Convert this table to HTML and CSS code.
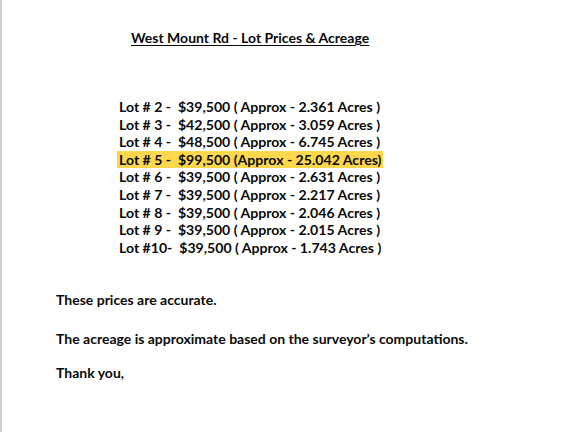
FILE: index.html
```html
<!DOCTYPE html>
<html>
<head>
<meta charset="utf-8">
<link rel="stylesheet" href="styles.css">
</head>
<body>
<div class="page">
  <h1 class="title">West Mount Rd - Lot Prices &amp; Acreage</h1>
  <ul class="lots">
    <li>Lot # 2 -&nbsp; $39,500 ( Approx - 2.361 Acres )</li>
    <li>Lot # 3 -&nbsp; $42,500 ( Approx - 3.059 Acres )</li>
    <li>Lot # 4 -&nbsp; $48,500 ( Approx - 6.745 Acres )</li>
    <li class="hl">Lot # 5 -&nbsp; $99,500 (Approx - 25.042 Acres)</li>
    <li>Lot # 6 -&nbsp; $39,500 ( Approx - 2.631 Acres )</li>
    <li>Lot # 7 -&nbsp; $39,500 ( Approx - 2.217 Acres )</li>
    <li>Lot # 8 -&nbsp; $39,500 ( Approx - 2.046 Acres )</li>
    <li>Lot # 9 -&nbsp; $39,500 ( Approx - 2.015 Acres )</li>
    <li>Lot #10-&nbsp; $39,500 ( Approx - 1.743 Acres )</li>
  </ul>
  <div class="notes">
    <p>These prices are accurate.</p>
    <p>The acreage is approximate based on the surveyor’s computations.</p>
    <p>Thank you,</p>
  </div>
</div>
</body>
</html>
```
FILE: styles.css
```css
html, body {
  margin: 0;
  padding: 0;
  background: #fff;
}
body {
  width: 576px;
  height: 432px;
  overflow: hidden;
  font-family: "Lato", "Open Sans", sans-serif;
  font-weight: 700;
  color: #0a0a0a;
}
.page {
  height: 432px;
  box-sizing: border-box;
  border-left: 2px solid #d0d0d0;
  padding: 29px 0 0 54px;
  display: flex;
  flex-direction: column;
}
.title {
  margin: 0 0 0 75px;
  font-size: 14px;
  line-height: 18px;
  font-weight: 700;
  text-decoration: underline;
  text-underline-offset: 2px;
}
.lots {
  list-style: none;
  margin: 51px 0 0 61px;
  padding: 0;
  display: flex;
  flex-direction: column;
  font-size: 14.1px;
  line-height: 17.6px;
  white-space: pre;
}
.lots li {
  padding-left: 2px;
  padding-right: 1px;
  align-self: flex-start;
}
.lots .hl {
  background: #fdd84d;
}
.notes {
  margin-top: 35px;
  font-size: 14px;
  line-height: 18px;
}
.notes p {
  margin: 0 0 21px 0;
}
.notes p:nth-child(2) {
  margin-bottom: 16px;
}
```
